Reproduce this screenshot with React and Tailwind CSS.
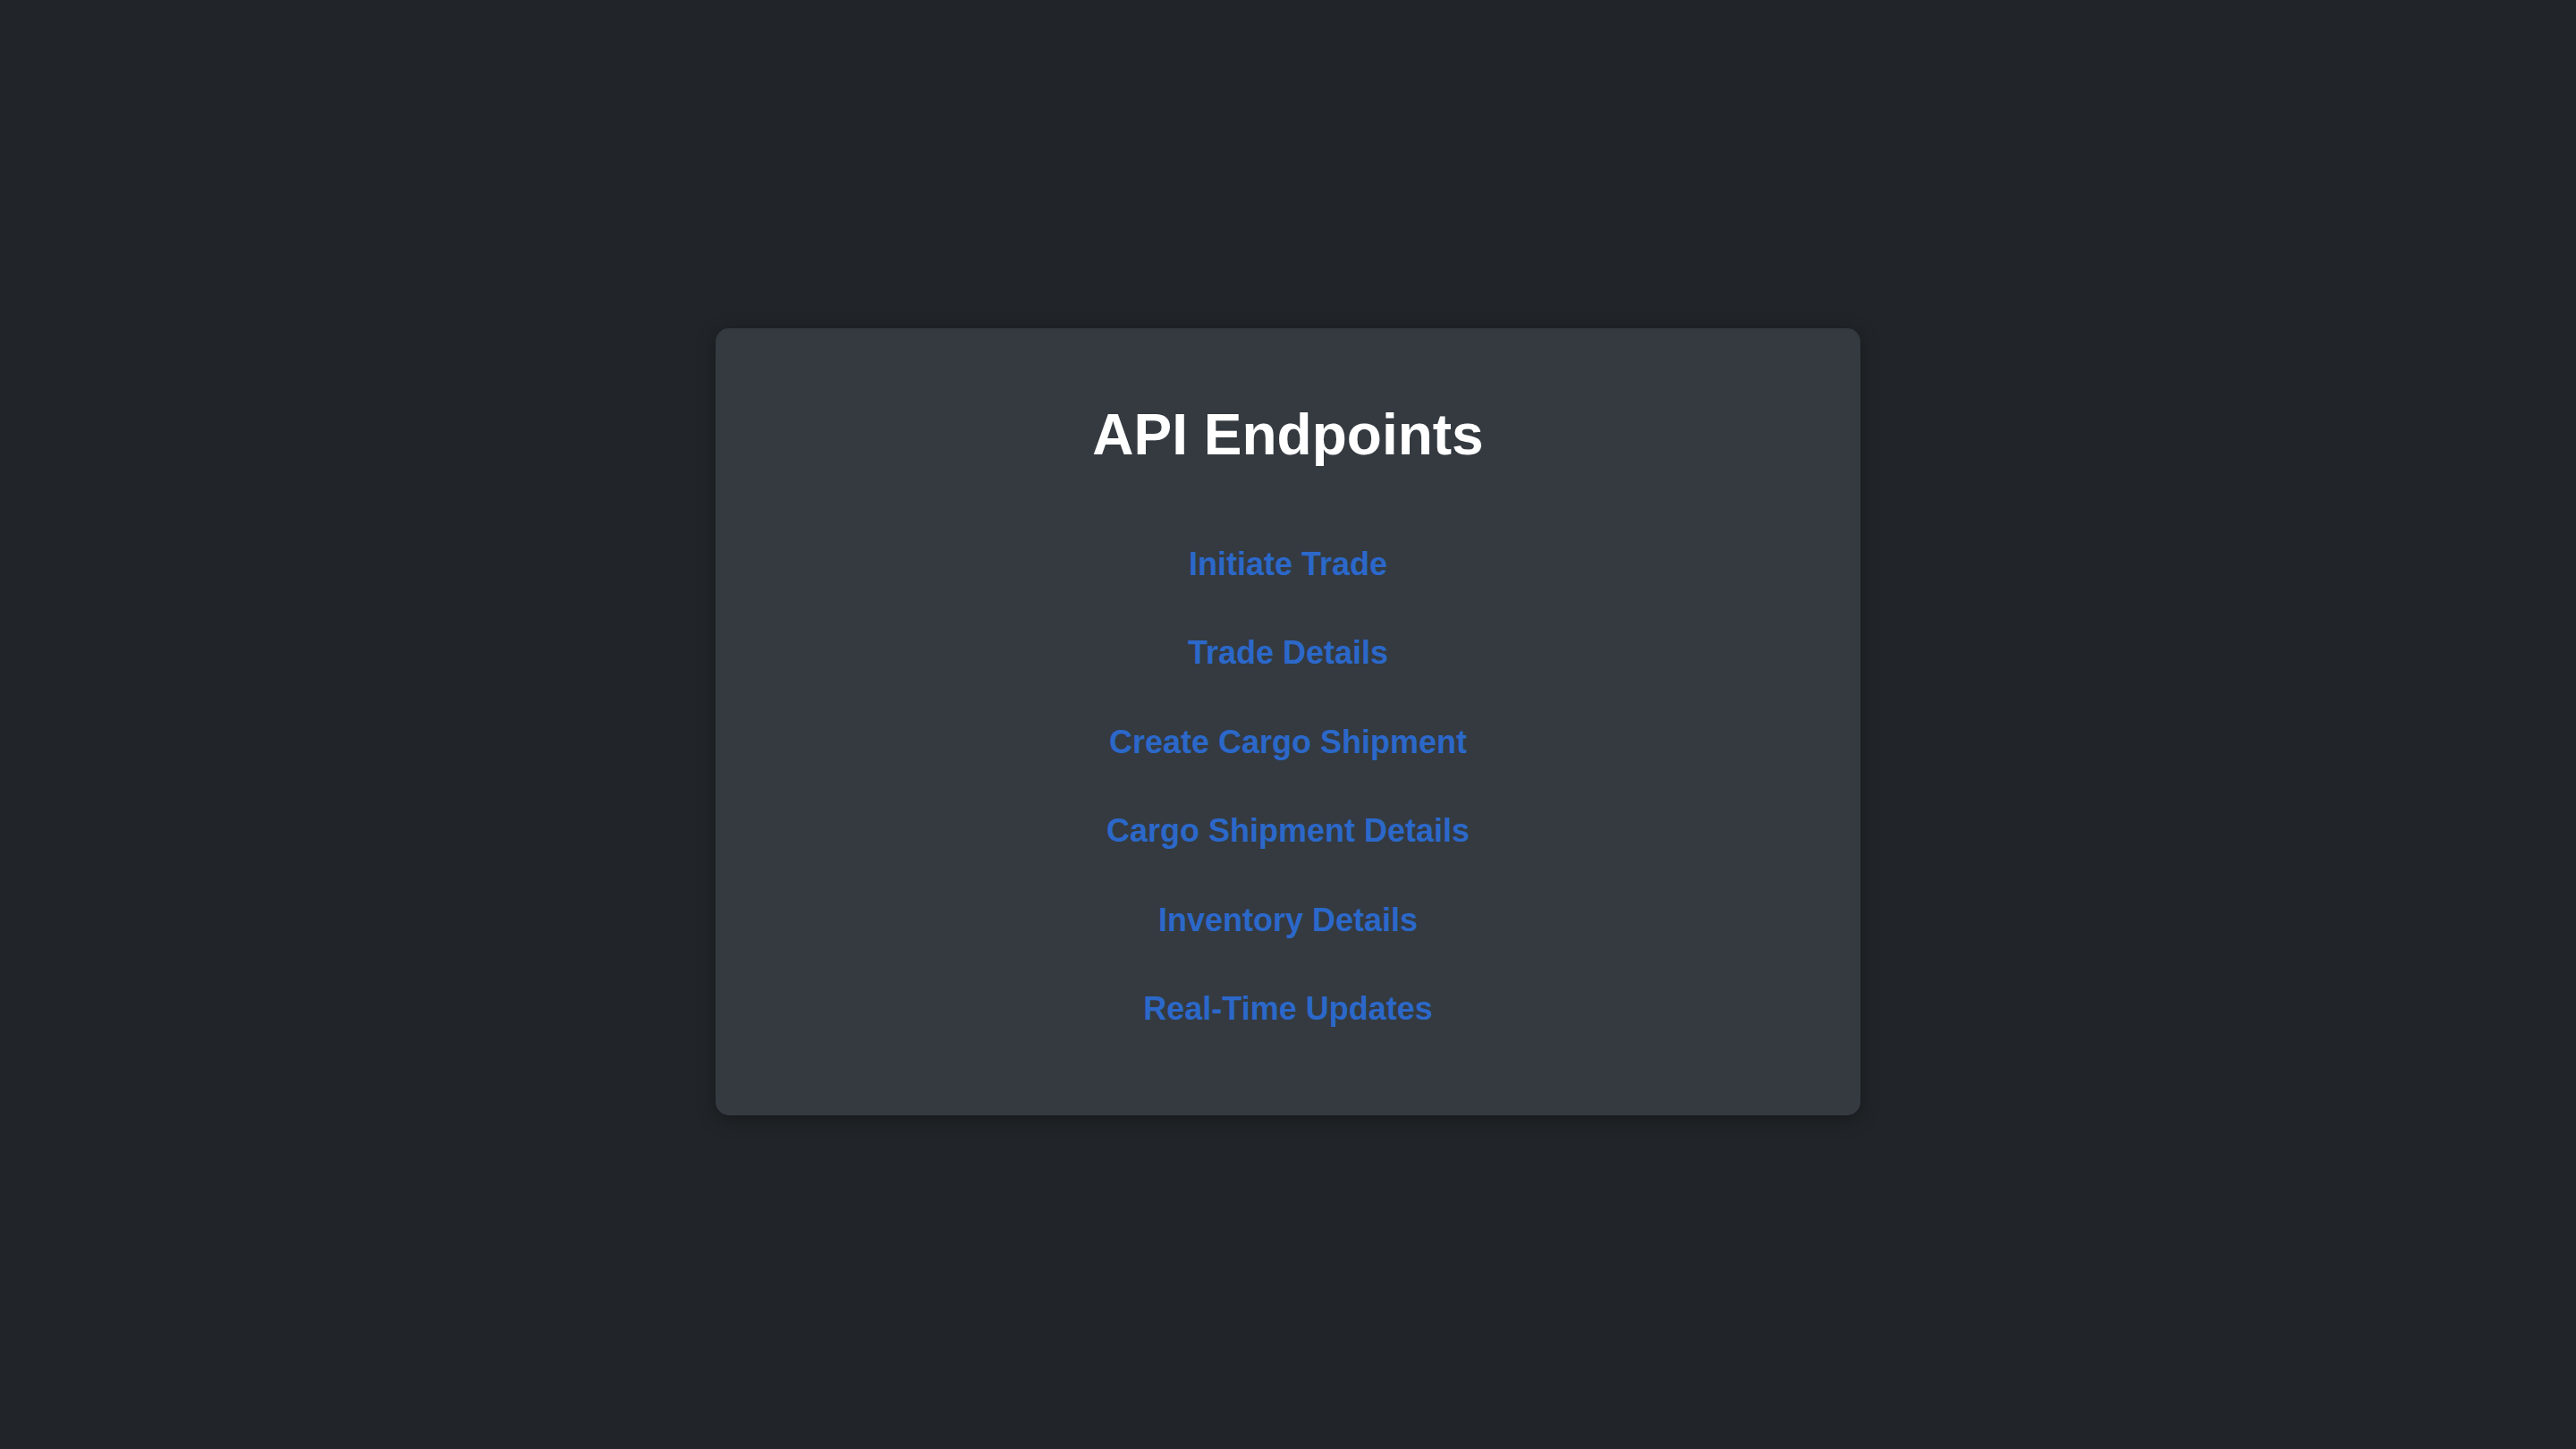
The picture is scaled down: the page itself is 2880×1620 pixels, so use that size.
export default function App() {
  const links = [
    "Initiate Trade",
    "Trade Details",
    "Create Cargo Shipment",
    "Cargo Shipment Details",
    "Inventory Details",
    "Real-Time Updates",
  ];
  return (
    <div
      className="min-h-screen w-full bg-[#212529] flex items-center justify-center pb-[6px]"
      style={{ fontFamily: '"Liberation Sans", Arial, sans-serif' }}
    >
      <div className="w-[1280px] h-[880px] bg-[#343a40] rounded-[15px] shadow-[0_4px_20px_rgba(0,0,0,0.35)] pt-[81px] flex flex-col items-center">
        <h1 className="text-[64px] leading-[1.2] font-bold text-white">API Endpoints</h1>
        <ul className="mt-[84px] flex flex-col items-center gap-[55.5px]">
          {links.map((l) => (
            <li key={l}>
              <a href="#" className="text-[36px] leading-[44px] font-bold text-[#2b68c9] no-underline">
                {l}
              </a>
            </li>
          ))}
        </ul>
      </div>
    </div>
  );
}
